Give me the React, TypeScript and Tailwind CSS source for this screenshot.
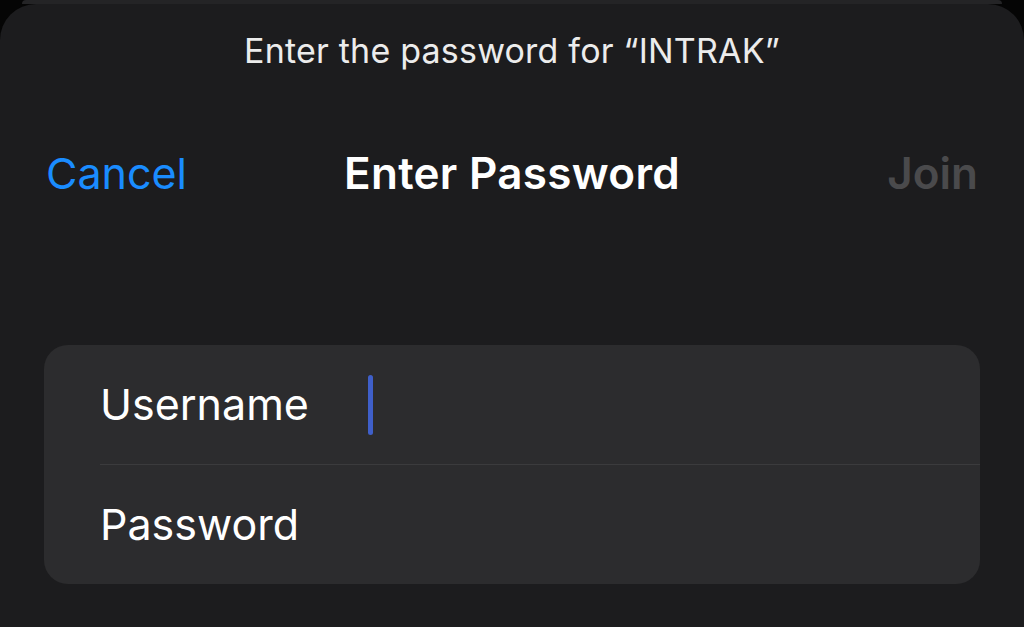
const App = () => {
  return (
    <div
      className="w-full h-[627px] bg-[#050505] overflow-hidden flex flex-col"
      style={{ fontFamily: "Inter, 'Noto Sans', sans-serif" }}
    >
      {/* card peeking behind the sheet */}
      <div className="mx-[22px] h-[4px] shrink-0 bg-[#242426] rounded-t-[10px]" />
      <div className="flex-1 bg-[#1c1c1e] rounded-t-[36px] flex flex-col">
        <p className="text-center text-[#ececec] text-[34px] leading-none mt-[30px] tracking-[0.2px]">
          Enter the password for “INTRAK”
        </p>

        <div className="flex items-center justify-between mt-[77px] pl-[46px] pr-[46px] h-[56px]">
          <span className="text-[#1a8cff] text-[43px] leading-none w-[200px]">
            Cancel
          </span>
          <span className="text-white text-[44px] font-semibold leading-none tracking-[0.3px]">
            Enter Password
          </span>
          <span className="text-[#4a4a4c] text-[44px] font-semibold leading-none w-[200px] text-right">
            Join
          </span>
        </div>

        <div className="mx-[44px] mt-[144px] bg-[#2c2c2e] rounded-[24px] overflow-hidden">
          <div className="flex items-center h-[119px] pl-[56px]">
            <span className="text-white text-[43px] leading-none w-[268px]">
              Username
            </span>
            <span className="w-[5px] h-[60px] rounded-full bg-[#3f5fc9]" />
          </div>
          <div className="ml-[56px] h-px bg-[#3b3b3d]" />
          <div className="flex items-center h-[119px] pl-[56px]">
            <span className="text-white text-[43px] leading-none">Password</span>
          </div>
        </div>
      </div>
    </div>
  );
};

export default App;
